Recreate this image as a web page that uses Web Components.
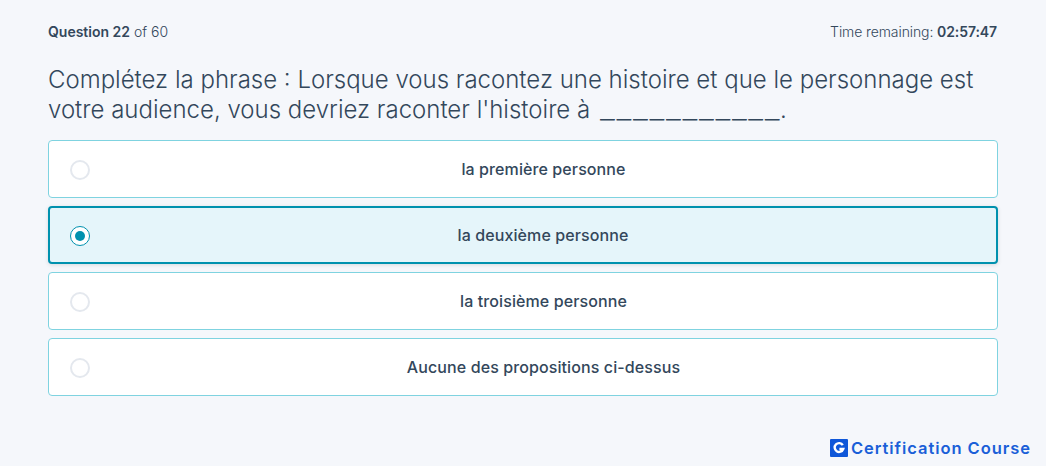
<!DOCTYPE html>
<html lang="fr">
<head>
<meta charset="utf-8">
<title>Question 22</title>
<style>
  html, body { margin: 0; height: 100%; }
  body { background: #f5f7fb; font-family: Inter, "Noto Sans", sans-serif; color: #33475b; }
  .blank {
    display: inline-block;
    width: 180px;
    letter-spacing: 1.2px;
    transform: translateY(1px) scaleX(1.38);
    transform-origin: left;
    margin-left: 3px;
  }
</style>
</head>
<body>
<quiz-page>
  <quiz-header slot="header" current="22" total="60" time="02:57:47"></quiz-header>
  <span slot="question">Complétez la phrase : Lorsque vous racontez une histoire et que le personnage est votre audience, vous devriez raconter l'histoire à <span class="blank">___________</span>.</span>
  <quiz-option>la première personne</quiz-option>
  <quiz-option selected>la deuxième personne</quiz-option>
  <quiz-option>la troisième personne</quiz-option>
  <quiz-option>Aucune des propositions ci-dessus</quiz-option>
  <brand-mark slot="brand"></brand-mark>
</quiz-page>
<script>
/**
 * Page frame: header, question, list of options and the brand in the corner.
 */
class QuizPage extends HTMLElement {
    constructor() {
        super();
        const shadow = this.attachShadow({ mode: 'open' });
        shadow.innerHTML = `
      <style>
        :host {
          display: flex;
          flex-direction: column;
          box-sizing: border-box;
          height: 466px;
          padding: 22px 48px 0;
          overflow: hidden;
        }
        .question {
          margin: 23px 0 15px;
          font-size: 24px;
          line-height: 30px;
          font-weight: 300;
        }
        .options {
          display: flex;
          flex-direction: column;
          gap: 8px;
        }
        .brand {
          display: flex;
          justify-content: flex-end;
          margin: 43px -33px 0 0;
        }
      </style>
      <slot name="header"></slot>
      <div class="question"><slot name="question"></slot></div>
      <div class="options"><slot></slot></div>
      <div class="brand"><slot name="brand"></slot></div>`;
    }
}
customElements.define('quiz-page', QuizPage);

/**
 * Question counter on the left, time remaining on the right.
 */
class QuizHeader extends HTMLElement {
    constructor() {
        super();
        const shadow = this.attachShadow({ mode: 'open' });
        shadow.innerHTML = `
      <style>
        :host {
          display: flex;
          justify-content: space-between;
          font-size: 14px;
          line-height: 20px;
          font-weight: 300;
        }
        b { font-weight: 600; }
        .time { letter-spacing: -.1px; margin-right: 1px; }
      </style>
      <div><b>Question <span id="current"></span></b> of <span id="total"></span></div>
      <div class="time">Time remaining: <b id="time"></b></div>`;
        shadow.getElementById('current').textContent = this.getAttribute('current');
        shadow.getElementById('total').textContent = this.getAttribute('total');
        shadow.getElementById('time').textContent = this.getAttribute('time');
    }
}
customElements.define('quiz-header', QuizHeader);

/**
 * One answer: radio on the left, label centred in the space that is left.
 */
class QuizOption extends HTMLElement {
    constructor() {
        super();
        const shadow = this.attachShadow({ mode: 'open' });
        shadow.innerHTML = `
      <style>
        :host {
          display: grid;
          grid-template-columns: 20px 1fr;
          align-items: center;
          box-sizing: border-box;
          height: 58px;
          padding: 0 0 0 21px;
          background: #fff;
          border: 1px solid #7fd3e0;
          border-radius: 4px;
          font-size: 16px;
          font-weight: 500;
          letter-spacing: .1px;
          text-align: center;
        }
        :host([selected]) {
          background: #e5f5fa;
          border: 2px solid #0091ae;
          padding: 0 0 0 20px;
          box-shadow: 0 1px 4px rgba(0, 0, 0, .12);
        }
        .radio {
          box-sizing: border-box;
          width: 20px;
          height: 20px;
          margin-top: 2px;
          border: 2px solid #e4e8ee;
          border-radius: 50%;
          background: #fff;
          display: grid;
          place-items: center;
        }
        :host([selected]) .radio { border: 1px solid #0091ae; }
        :host([selected]) .radio::after {
          content: '';
          width: 10px;
          height: 10px;
          border-radius: 50%;
          background: #0091ae;
        }
      </style>
      <span class="radio"></span>
      <span><slot></slot></span>`;
    }
}
customElements.define('quiz-option', QuizOption);

/**
 * Certification Course logo: blue tile with a white G, then the name.
 */
class BrandMark extends HTMLElement {
    constructor() {
        super();
        const shadow = this.attachShadow({ mode: 'open' });
        shadow.innerHTML = `
      <style>
        :host {
          display: flex;
          align-items: center;
          gap: 3px;
          font-family: Inter, sans-serif;
          font-size: 16.5px;
          font-weight: 600;
          letter-spacing: .95px;
          line-height: 18px;
          color: #1a5fd8;
        }
        svg { display: block; }
      </style>
      <svg width="18" height="18" viewBox="0 0 18 18">
        <rect width="18" height="18" rx="1" fill="#0f57d9"/>
        <path d="M12.8 6.2A4.4 4.4 0 1 0 13.2 10H9.4" fill="none" stroke="#fff" stroke-width="2.4"/>
      </svg>
      <span>Certification Course</span>`;
    }
}
customElements.define('brand-mark', BrandMark);
</script>
</body>
</html>
